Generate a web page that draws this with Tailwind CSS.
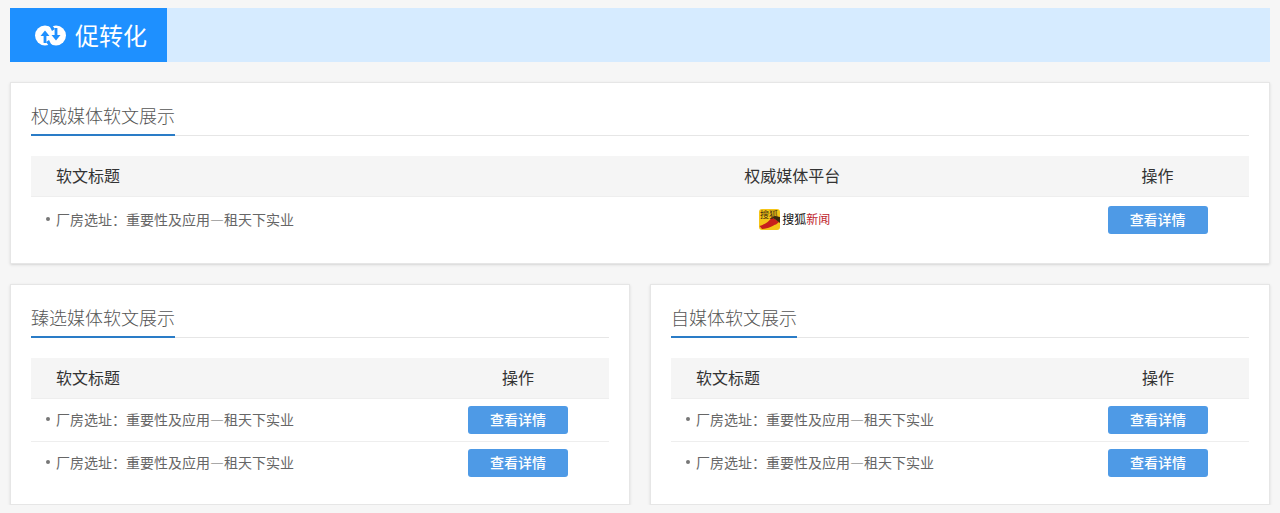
<!DOCTYPE html>
<html lang="zh-CN">
<head>
    <meta charset="UTF-8">
    <meta name="viewport" content="width=device-width, initial-scale=1.0">
    <title>促转化</title>
    <script src="https://cdn.jsdelivr.net/npm/@tailwindcss/browser@4"></script>
</head>
<body class="bg-[#f6f6f6] font-['Noto_Sans_CJK_SC','Liberation_Sans',sans-serif] overflow-hidden">
    <div class="px-[10px] pt-2">
        <!-- Banner -->
        <div class="h-[54px] bg-[#d6ebff] flex">
            <div class="w-[157px] bg-[#1e90ff] flex items-center pl-[25px] gap-[9px] text-white text-2xl">
                <svg class="w-[31px] h-[21px] shrink-0" viewBox="0 0 31 21">
                    <circle cx="10" cy="10.5" r="10" fill="#fff"/>
                    <circle cx="21" cy="10.5" r="10" fill="#fff"/>
                    <path d="M10 5.5 L14.5 11 L11.4 11 L11.4 18 L8.6 18 L8.6 11 L5.5 11 Z" fill="#1e90ff"/>
                    <path d="M21 15.5 L16.5 10 L19.6 10 L19.6 3 L22.4 3 L22.4 10 L25.5 10 Z" fill="#1e90ff"/>
                    <path d="M14 21 L11 17 L14 15 L17 21 Z" fill="#1e90ff"/>
                    <path d="M17 0 L20 4 L17 6 L14 0 Z" fill="#1e90ff"/>
                </svg>
                <span>促转化</span>
            </div>
        </div>

        <!-- 权威媒体 -->
        <div class="mt-5 bg-white border border-[#e6e6e6] shadow-sm px-5 pt-5 h-[182px]">
            <div class="border-b border-[#e6e6e6] h-[33px]">
                <span class="inline-block h-[33px] border-b-2 border-[#2a7cc7] text-lg leading-[25px] font-light text-[#555]">权威媒体软文展示</span>
            </div>
            <div class="mt-5 grid grid-cols-[40%_45%_15%] h-[41px] items-center bg-[#f5f5f5] border-b border-[#eee] text-base text-[#333]">
                <div class="pl-[25px] pb-[2px]">软文标题</div>
                <div class="text-center pb-[2px]">权威媒体平台</div>
                <div class="text-center pb-[2px]">操作</div>
            </div>
            <div class="grid grid-cols-[40%_45%_15%] h-[46px] items-center text-sm text-[#666]">
                <div class="pl-[25px] pb-[2px] relative">
                    <span class="absolute left-[15px] top-[8px] w-1 h-1 rounded-full bg-[#777]"></span>
                    厂房选址：重要性及应用—租天下实业
                </div>
                <div class="flex justify-center items-center pl-[5px] pb-[2px]">
                    <svg class="w-[21px] h-[21px] shrink-0" viewBox="0 0 21 21">
                        <rect width="21" height="21" rx="3" fill="#f5c518"/>
                        <path d="M0.5 17 C6 15 10 13 13 8 L20 13 L17 15.5 C14 16 10 20 3 20 Z" fill="#c8201c"/>
                        <path d="M13 8 L21 14 L21 8 L16 7 Z" fill="#3a2a10"/>
                        <text x="1" y="9" font-size="9" fill="#3a2a10">搜狐</text>
                    </svg>
                    <span class="ml-[2px] text-xs leading-none text-[#111]">搜狐<span class="text-[#c0242c]">新闻</span></span>
                </div>
                <div class="flex justify-center">
                    <button class="w-[100px] h-7 pb-[2px] rounded-[3px] bg-[#4e9ae6] text-white text-sm font-medium">查看详情</button>
                </div>
            </div>
        </div>

        <div class="mt-5 grid grid-cols-2 gap-5">
            <!-- 臻选媒体 -->
            <div class="bg-white border border-[#e6e6e6] shadow-sm px-5 pt-5 h-[221px]">
                <div class="border-b border-[#e6e6e6] h-[33px]">
                    <span class="inline-block h-[33px] border-b-2 border-[#2a7cc7] text-lg leading-[25px] font-light text-[#555]">臻选媒体软文展示</span>
                </div>
                <div class="mt-5 grid grid-cols-[1fr_182px] h-[41px] items-center bg-[#f5f5f5] border-b border-[#eee] text-base text-[#333]">
                    <div class="pl-[25px] pb-[2px]">软文标题</div>
                    <div class="text-center pb-[2px]">操作</div>
                </div>
                <div class="grid grid-cols-[1fr_182px] h-[43px] items-center border-b border-[#eee] text-sm text-[#666]">
                    <div class="pl-[25px] pb-[2px] relative">
                        <span class="absolute left-[15px] top-[8px] w-1 h-1 rounded-full bg-[#777]"></span>
                        厂房选址：重要性及应用—租天下实业
                    </div>
                    <div class="flex justify-center">
                        <button class="w-[100px] h-7 pb-[2px] rounded-[3px] bg-[#4e9ae6] text-white text-sm font-medium">查看详情</button>
                    </div>
                </div>
                <div class="grid grid-cols-[1fr_182px] h-[42px] items-center text-sm text-[#666]">
                    <div class="pl-[25px] pb-[2px] relative">
                        <span class="absolute left-[15px] top-[8px] w-1 h-1 rounded-full bg-[#777]"></span>
                        厂房选址：重要性及应用—租天下实业
                    </div>
                    <div class="flex justify-center">
                        <button class="w-[100px] h-7 pb-[2px] rounded-[3px] bg-[#4e9ae6] text-white text-sm font-medium">查看详情</button>
                    </div>
                </div>
            </div>

            <!-- 自媒体 -->
            <div class="bg-white border border-[#e6e6e6] shadow-sm px-5 pt-5 h-[221px]">
                <div class="border-b border-[#e6e6e6] h-[33px]">
                    <span class="inline-block h-[33px] border-b-2 border-[#2a7cc7] text-lg leading-[25px] font-light text-[#555]">自媒体软文展示</span>
                </div>
                <div class="mt-5 grid grid-cols-[1fr_182px] h-[41px] items-center bg-[#f5f5f5] border-b border-[#eee] text-base text-[#333]">
                    <div class="pl-[25px] pb-[2px]">软文标题</div>
                    <div class="text-center pb-[2px]">操作</div>
                </div>
                <div class="grid grid-cols-[1fr_182px] h-[43px] items-center border-b border-[#eee] text-sm text-[#666]">
                    <div class="pl-[25px] pb-[2px] relative">
                        <span class="absolute left-[15px] top-[8px] w-1 h-1 rounded-full bg-[#777]"></span>
                        厂房选址：重要性及应用—租天下实业
                    </div>
                    <div class="flex justify-center">
                        <button class="w-[100px] h-7 pb-[2px] rounded-[3px] bg-[#4e9ae6] text-white text-sm font-medium">查看详情</button>
                    </div>
                </div>
                <div class="grid grid-cols-[1fr_182px] h-[42px] items-center text-sm text-[#666]">
                    <div class="pl-[25px] pb-[2px] relative">
                        <span class="absolute left-[15px] top-[8px] w-1 h-1 rounded-full bg-[#777]"></span>
                        厂房选址：重要性及应用—租天下实业
                    </div>
                    <div class="flex justify-center">
                        <button class="w-[100px] h-7 pb-[2px] rounded-[3px] bg-[#4e9ae6] text-white text-sm font-medium">查看详情</button>
                    </div>
                </div>
            </div>
        </div>
    </div>
</body>
</html>
